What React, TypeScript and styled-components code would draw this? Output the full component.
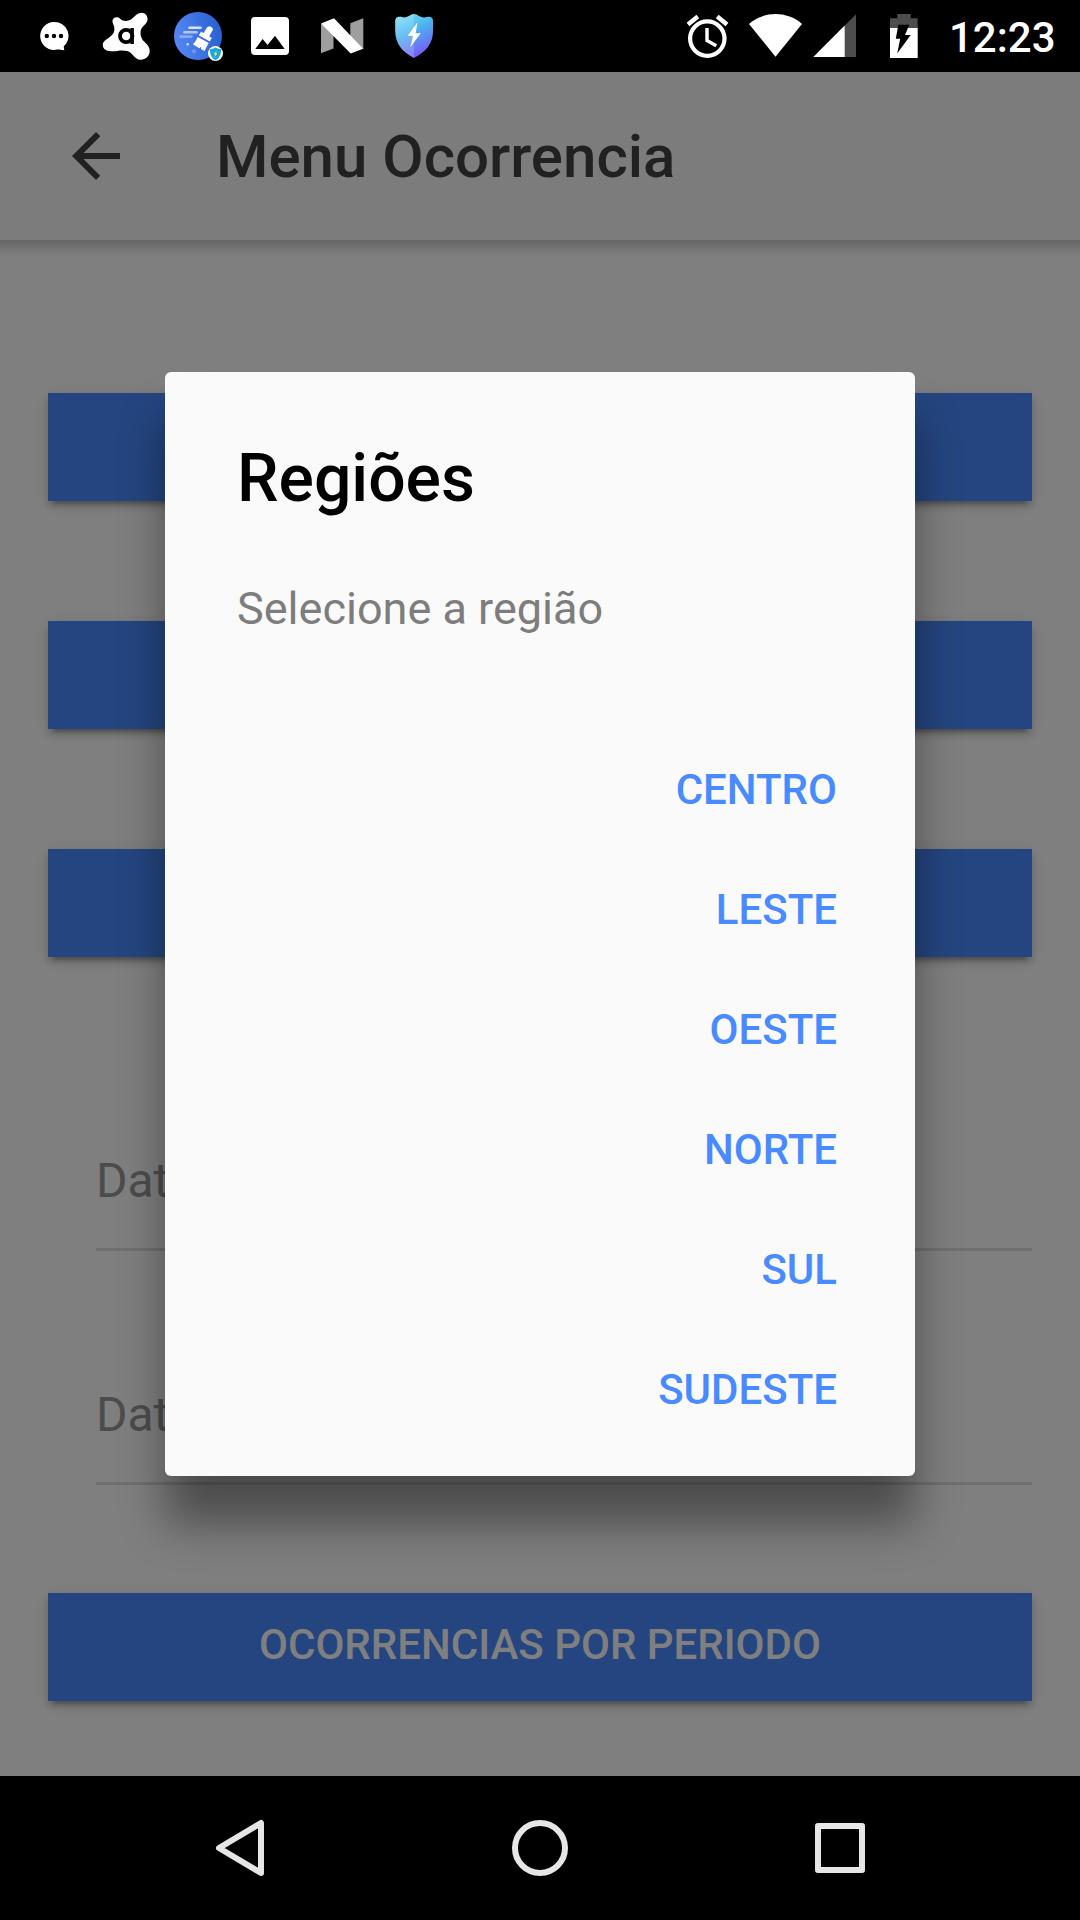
import React from "react";
import styled, { createGlobalStyle } from "styled-components";

const GlobalStyle = createGlobalStyle`
  * { box-sizing: border-box; }
  html, body { margin: 0; padding: 0; background: #000; }
  button { font-family: inherit; border: 0; margin: 0; }
`;

const Screen = styled.div`
  display: flex;
  flex-direction: column;
  width: 1080px;
  height: 1920px;
  overflow: hidden;
  background: #000;
  font-family: Roboto, "Noto Sans", sans-serif;
`;

const StatusBar = styled.div`
  display: flex;
  flex: none;
  height: 72px;
  padding: 0 24px 0 18px;
  background: #000;
`;

const StatusGroup = styled.div<{ $end?: boolean }>`
  display: flex;
  ${(p) => p.$end && "margin-left: auto;"}
`;

const StatusSvg = styled.svg`
  display: block;
  flex: none;
  height: 72px;
`;

const Clock = styled.div`
  width: 119px;
  padding-left: 12px;
  line-height: 75px;
  font-size: 42px;
  font-weight: 500;
  color: #fff;
  white-space: nowrap;
`;

const Page = styled.main`
  position: relative;
  display: flex;
  flex-direction: column;
  height: 1704px;
  background: #fff;
`;

const Header = styled.header`
  position: relative;
  display: flex;
  flex: none;
  align-items: center;
  height: 168px;
  padding-left: 72px;
  background: #f8f8f8;

  &::after {
    content: "";
    position: absolute;
    left: 0;
    right: 0;
    top: 100%;
    height: 18px;
    background: linear-gradient(rgba(0, 0, 0, 0.2), rgba(0, 0, 0, 0.13) 30%, rgba(0, 0, 0, 0.03) 75%, transparent);
  }
`;

const BackIcon = styled.svg`
  display: block;
  width: 48px;
  height: 48px;
  fill: #424242;
`;

const PageTitle = styled.h1`
  margin: 2px 0 0 96px;
  font-size: 60px;
  line-height: 72px;
  font-weight: 500;
  color: #424242;
`;

const Content = styled.div`
  display: flex;
  flex-direction: column;
  padding: 153px 48px 0;
`;

const ButtonStack = styled.div`
  display: flex;
  flex-direction: column;
  gap: 120px;
`;

const BlockButton = styled.button`
  display: block;
  width: 100%;
  height: 108px;
  padding: 0 0 5px;
  background: #488aff;
  color: #fff;
  font-size: 42px;
  font-weight: 500;
  text-align: center;
  box-shadow: 0 6px 6px 0 rgba(0, 0, 0, 0.14), 0 9px 3px -6px rgba(0, 0, 0, 0.2), 0 3px 15px 0 rgba(0, 0, 0, 0.12);
`;

const FieldList = styled.div`
  display: flex;
  flex-direction: column;
  gap: 90px;
  margin: 150px 0 108px;
  padding-left: 48px;
`;

const Field = styled.div`
  height: 144px;
  border-bottom: 3px solid #dedede;
  font-size: 48px;
  line-height: 147px;
  color: #999;
`;

const Backdrop = styled.div`
  position: absolute;
  inset: 0;
  display: flex;
  align-items: center;
  justify-content: center;
  background: rgba(0, 0, 0, 0.5);
`;

const Dialog = styled.section`
  display: flex;
  flex-direction: column;
  width: 750px;
  height: 1104px;
  padding: 69px 24px 26px;
  border-radius: 6px;
  background: #fafafa;
  box-shadow: 0 48px 45px rgba(0, 0, 0, 0.4);
`;

const DialogTitle = styled.h2`
  margin: 0;
  padding: 0 48px;
  font-size: 66px;
  line-height: 76px;
  font-weight: 500;
  color: #000;
`;

const DialogMessage = styled.p`
  margin: 66px 0 94px;
  padding: 0 48px;
  font-size: 45px;
  line-height: 52px;
  color: #7d7d7d;
`;

const DialogActions = styled.div`
  display: flex;
  flex-direction: column;
  align-items: flex-end;
`;

const DialogButton = styled.button`
  height: 120px;
  margin-right: 24px;
  padding: 0 30px;
  background: transparent;
  color: #488aff;
  font-size: 42px;
  font-weight: 500;
`;

const NavBar = styled.nav`
  display: flex;
  flex: none;
  align-items: center;
  justify-content: space-between;
  height: 144px;
  padding: 0 204px;
  background: #000;
`;

const NavIcon = styled.svg`
  display: block;
  width: 72px;
  height: 72px;
  fill: none;
  stroke: #e6e6e6;
  stroke-width: 6;
  stroke-linejoin: round;
`;

type StatusIconProps = { x: number; w?: number; children: React.ReactNode };

const StatusIcon = ({ x, w = 72, children }: StatusIconProps) => (
  <StatusSvg width={w} viewBox={`${x} 0 ${w} 72`}>
    {children}
  </StatusSvg>
);

const regions = ["CENTRO", "LESTE", "OESTE", "NORTE", "SUL", "SUDESTE"];

export default function App() {
  return (
    <>
      <GlobalStyle />
      <Screen>
        <StatusBar>
          <StatusGroup>
            <StatusIcon x={18}>
              <path fill="#fff" d="M54 22a14 14 0 1 0 3.500 27.600c1.500-.3 2.500 0 6.800.6l-.6-3.600A14 14 0 0 0 54 22z" />
              <circle cx="46.800" cy="36" r="2.200" />
              <circle cx="54" cy="36" r="2.200" />
              <circle cx="61" cy="36" r="2.200" />
            </StatusIcon>
            <StatusIcon x={90}>
              <path
                fill="#fff"
                d="M112.500 20.500c.5-3.800 5.500-4.500 8-1.500 3 3 8.500 2.500 12-.8C136 15 138 12.700 141.500 12.700c4 0 6.500 3.300 6 7.300-.5 4.500-6.500 6.500-6.900 11.500-.5 4.500 1 8 4.500 11 3 2.700 4.600 5.300 4.600 8.500 0 5-4 8.700-9 8.700-6.500 0-7.500-7-13.700-8.700-6-1.500-10.500.5-16 .2-5-.2-8-2.500-8.200-6-.2-4 3.200-5.200 7-8.200 3.500-2.700 5.200-5.700 4.500-9.500-.500-2.700-2-4.500-1.800-7z"
              />
              <circle cx="126.200" cy="36" r="6.200" fill="none" stroke="#000" strokeWidth="3.800" />
              <rect x="130.400" y="28" width="3.500" height="16" />
            </StatusIcon>
            <StatusIcon x={162}>
              <defs>
                <linearGradient id="cleaner" x1="0" y1=".6" x2="1" y2=".4">
                  <stop offset="0" stopColor="#5588f5" />
                  <stop offset="1" stopColor="#2860cf" />
                </linearGradient>
              </defs>
              <circle cx="198" cy="36" r="24" fill="url(#cleaner)" />
              <g stroke="#fff" strokeWidth="2.600" strokeLinecap="round">
                <path opacity=".8" d="M189.500 27.700h11" />
                <path opacity=".6" d="M184.500 32.300h12" />
                <path opacity=".35" d="M180.500 36.600h11" />
              </g>
              <circle cx="187.700" cy="44.300" r="1.300" fill="#d5e1fb" />
              <circle cx="194" cy="51.300" r="2" fill="#719be9" />
              <path fill="#fff" d="M206.800 27.800c1.400-2.400 6.800-1.200 6 2.200l-3.600 6.200 2.600 1.800-2 3.600-11-6.300 2.200-3.500 2.600 1.300z" />
              <path fill="#fff" d="M197.800 36.900l11 6.200c-1.700 2.500-2.500 4.500-4.300 8l-3.600-2 .5-2.800-2 2-6.600-4c2.300-2 3.500-4.500 5-7.400z" />
              <circle cx="215.500" cy="53.500" r="7.500" fill="#fff" />
              <path fill="#16a6e4" d="M215.500 47.500c2 1.400 3.700 1.600 5.500 1.700.2 5-1.400 8.700-5.500 11-4.100-2.300-5.700-6-5.500-11 1.800-.1 3.500-.3 5.500-1.700z" />
              <path fill="#f3e74c" d="M217 50.500l-3.600 3.800h1.800l-.8 3 3.200-4h-1.800z" />
            </StatusIcon>
            <StatusIcon x={234}>
              <rect x="251" y="17" width="38" height="38" rx="4" fill="#fff" />
              <path d="M255.300 49l7.300-10 5 6 7.400-9.200 9.700 13.200z" />
            </StatusIcon>
            <StatusIcon x={306}>
              <path fill="#9e9e9e" d="M321 24l12.500 4v20.500L321 53.300zM350.300 23.200l13-5v31l-13-9z" />
              <path fill="#fff" d="M321 23.600l13-5.300 29.200 30.500-12.500 4.700z" />
            </StatusIcon>
            <StatusIcon x={378}>
              <defs>
                <linearGradient id="shield" x1=".25" y1="0" x2=".65" y2="1">
                  <stop offset="0" stopColor="#75dcf2" />
                  <stop offset=".4" stopColor="#49b3ef" />
                  <stop offset="1" stopColor="#8051fa" />
                </linearGradient>
              </defs>
              <path
                fill="url(#shield)"
                d="M414 14c3.500 0 5.500 3.500 10 3.400 2.500-.1 3.500-.8 5.500-.6 2.600.3 3.600 2 3.600 5V30c0 14-7 21.500-19.100 28-12.100-6.500-18.800-14-18.800-28v-8.200c0-3 1-4.700 3.600-5 2-.2 3 .5 5.500.6 4.300.1 6.200-3.400 9.700-3.400z"
              />
              <path fill="#fff" opacity=".18" d="M414 14c-3.500 0-5.400 3.500-9.700 3.400-2.500-.1-3.500-.8-5.500-.6-2.600.3-3.600 2-3.600 5V30c0 14 6.700 21.500 18.800 28z" />
              <path fill="#fff" d="M417.500 22.300l-10 13.700h5.600l-2.800 11.300 10.500-14h-5.200z" />
            </StatusIcon>
          </StatusGroup>
          <StatusGroup $end>
            <StatusIcon x={671}>
              <circle cx="707.300" cy="38.600" r="17.200" fill="none" stroke="#fff" strokeWidth="4.200" />
              <path d="M707 28v12.500l9.300 5.200" fill="none" stroke="#fff" strokeWidth="3.400" />
              <path d="M688 24.500l9.800-8M717.200 16.500l9.800 8" stroke="#fff" strokeWidth="4.400" />
            </StatusIcon>
            <StatusIcon x={743} w={65}>
              <path fill="#fff" d="M775.500 56.700L749 24c15-13.200 38-13.200 53 0z" />
            </StatusIcon>
            <StatusIcon x={808} w={63}>
              <path fill="#4d4d4d" d="M856 14.300V57h-12V26.300z" />
              <path fill="#fff" d="M844.700 25.600V57h-31.400z" />
            </StatusIcon>
            <StatusIcon x={871} w={66}>
              <path fill="#4d4d4d" d="M897.300 14h13.400v4.300h7V28H890v-9.700h7.300z" />
              <path fill="#fff" d="M890 28h27.700v30H890z" />
              <path d="M898.300 24.700h11l-4.300 10.300h5.700l-13.500 18.500 3-14.800h-4.400z" />
            </StatusIcon>
            <Clock>12:23</Clock>
          </StatusGroup>
        </StatusBar>

        <Page>
          <Header>
            <BackIcon viewBox="0 0 48 48">
              <path d="M48 21H11.500L28.300 4.200 24 0 0 24l24 24 4.200-4.200L11.500 27H48z" />
            </BackIcon>
            <PageTitle>Menu Ocorrencia</PageTitle>
          </Header>
          <Content>
            <ButtonStack>
              <BlockButton />
              <BlockButton />
              <BlockButton />
            </ButtonStack>
            <FieldList>
              <Field>Data</Field>
              <Field>Data</Field>
            </FieldList>
            <BlockButton>OCORRENCIAS POR PERIODO</BlockButton>
          </Content>

          <Backdrop>
            <Dialog>
              <DialogTitle>Regiões</DialogTitle>
              <DialogMessage>Selecione a região</DialogMessage>
              <DialogActions>
                {regions.map((name) => (
                  <DialogButton key={name}>{name}</DialogButton>
                ))}
              </DialogActions>
            </Dialog>
          </Backdrop>
        </Page>

        <NavBar>
          <NavIcon viewBox="0 0 72 72">
            <path d="M57 11v50L15 36z" />
          </NavIcon>
          <NavIcon viewBox="0 0 72 72">
            <circle cx="36" cy="36" r="25" />
          </NavIcon>
          <NavIcon viewBox="0 0 72 72">
            <rect x="14" y="14" width="44" height="44" />
          </NavIcon>
        </NavBar>
      </Screen>
    </>
  );
}
